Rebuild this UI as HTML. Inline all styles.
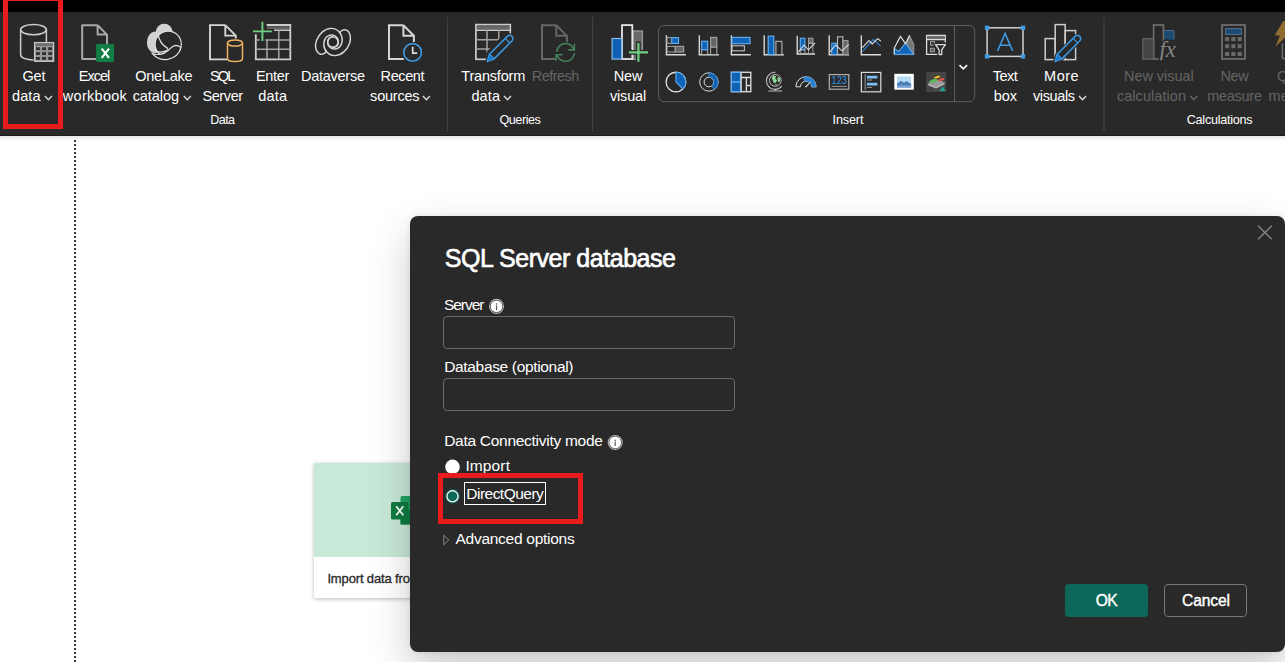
<!DOCTYPE html>
<html><head><meta charset="utf-8"><title>Power BI</title>
<style>
html,body{margin:0;padding:0;overflow:hidden}
html{width:1285px;height:662px}
body{width:1285px;height:662px;overflow:hidden;position:relative;background:#fff;font-family:"Liberation Sans",sans-serif}
.t{position:absolute;white-space:nowrap;line-height:20px;font-family:"Liberation Sans",sans-serif}
.abs{position:absolute}
svg{position:absolute;left:0;top:0;overflow:visible}
</style></head><body>
<!-- canvas -->
<div class="abs" style="left:0;top:136px;width:1285px;height:5px;background:linear-gradient(#e4e4e4,#ffffff)"></div>
<div class="abs" style="left:74px;top:140px;width:2px;height:522px;background:repeating-linear-gradient(#3a3a3a 0 2px,#fff 2px 4px)"></div>
<!-- background card -->
<div class="abs" style="left:314px;top:463px;width:200px;height:135px;background:#fff;box-shadow:0 1px 4px rgba(0,0,0,.28)">
 <div class="abs" style="left:0;top:0;width:200px;height:94px;background:#c8e9d8"></div>
</div>
<svg width="1285" height="662" viewBox="0 0 1285 662">
 <rect x="400.5" y="496" width="20" height="28.5" rx="1.5" fill="#21a366"/>
 <rect x="400.5" y="510" width="20" height="14.5" fill="#107c41"/>
 <rect x="400.5" y="503" width="20" height="7" fill="#33c481" opacity=".0"/>
 <rect x="391" y="502" width="17.5" height="17.5" rx="1.5" fill="#107c41"/>
 <path d="M396.2 506.3 L403.3 515.3 M403.3 506.3 L396.2 515.3" stroke="#fff" stroke-width="1.7" fill="none"/>
</svg>
<span class="t" style="left:327.40px;top:568.70px;font-size:13px;color:#2b2b2b;letter-spacing:-0.145px;-webkit-text-stroke:0.35px #2b2b2b;">Import data from Excel</span>
<!-- top bar + ribbon -->
<div class="abs" style="left:0;top:0;width:1285px;height:12px;background:#000"></div>
<div class="abs" style="left:0;top:12px;width:1285px;height:124px;background:#292929;border-bottom:1px solid #1c1c1c;box-sizing:border-box"></div>
<svg width="1285" height="140" viewBox="0 0 1285 140">
<defs><clipPath id="fxc"><rect x="1150" y="30" width="40" height="30.2"/></clipPath></defs>
<path d="M20.6 29.6 V54.8 C20.6 57.6 26 59.9 33.6 59.9 M46.4 29.6 V42" fill="none" stroke="#cdcdcd" stroke-width="1.5"/>
<ellipse cx="33.5" cy="29.6" rx="12.9" ry="5.1" fill="none" stroke="#cdcdcd" stroke-width="1.5"/>
<rect x="34.6" y="42.6" width="19" height="18.7" fill="#959595" stroke="#c6c6c6" stroke-width="1.3"/>
<rect x="35.3" y="43.3" width="17.6" height="2.6" fill="#6e6e6e"/>
<rect x="36.0" y="47.3" width="3.9" height="2.8" fill="#2f2f2f"/>
<rect x="36.0" y="52.2" width="3.9" height="2.8" fill="#2f2f2f"/>
<rect x="36.0" y="57.0" width="3.9" height="2.8" fill="#2f2f2f"/>
<rect x="42.1" y="47.3" width="3.9" height="2.8" fill="#2f2f2f"/>
<rect x="42.1" y="52.2" width="3.9" height="2.8" fill="#2f2f2f"/>
<rect x="42.1" y="57.0" width="3.9" height="2.8" fill="#2f2f2f"/>
<rect x="48.2" y="47.3" width="3.9" height="2.8" fill="#2f2f2f"/>
<rect x="48.2" y="52.2" width="3.9" height="2.8" fill="#2f2f2f"/>
<rect x="48.2" y="57.0" width="3.9" height="2.8" fill="#2f2f2f"/>
<path d="M97.6 25.2 H82.2 V58.900000000000006 H96 M97.6 25.2 L107.0 34.6 V44 M97.6 25.2 V34.6 H107.0" fill="none" stroke="#a9a9a9" stroke-width="2.0" stroke-linejoin="round"/>
<rect x="96.1" y="43.9" width="18" height="18.2" rx="1.4" fill="#127d44"/>
<path d="M101.7 48.6 L109.0 57.8 M109.0 48.6 L101.7 57.8" stroke="#fff" stroke-width="2.1" fill="none"/>
<circle cx="164.2" cy="32.2" r="8.4" fill="#d2d2d2"/>
<ellipse cx="155.2" cy="42.4" rx="8.3" ry="10.9" fill="#d2d2d2"/>
<circle cx="168.2" cy="44.2" r="13.1" fill="#292929" stroke="#e2e2e2" stroke-width="1.2"/>
<path d="M151.8 52.9 C157 55.8 163.6 54.6 168.4 50.2 C171 47.8 173 45.4 176 45.3 C178.2 45.3 179.6 46.4 180.9 47.6 A16.5 16.5 0 0 1 151.8 52.9 Z" fill="#292929" stroke="#e2e2e2" stroke-width="1.2" stroke-linejoin="round"/>
<path d="M157.2 51.6 C161 52.6 165.4 51.6 168.6 49.6" fill="none" stroke="#e2e2e2" stroke-width="1.2"/>
<path d="M157.9 33.4 C158.6 39.5 162.2 45.4 168 48.6" fill="none" stroke="#e2e2e2" stroke-width="1.3"/>
<path d="M225.3 25.1 H210 V59.4 H227 M225.3 25.1 L235.8 35.6 V38.6 M225.3 25.1 V35.6 H235.8" fill="none" stroke="#d6d6d6" stroke-width="1.9" stroke-linejoin="miter"/>
<path d="M227.5 43 V58.4 C227.5 60.2 230.8 61.5 235 61.5 C239.2 61.5 242.5 60.2 242.5 58.4 V43" fill="#292929" stroke="#f0b263" stroke-width="1.5"/>
<ellipse cx="235" cy="43" rx="7.5" ry="3.1" fill="#292929" stroke="#f0b263" stroke-width="1.5"/>
<path d="M266.6 25 H290.3 V59.3 H255.8 V34.2" fill="none" stroke="#cecece" stroke-width="1.8"/>
<rect x="267" y="26.3" width="21.9" height="2.7" fill="#626262"/>
<path d="M274 30.2 H290.3" fill="none" stroke="#cecece" stroke-width="1.5"/>
<path d="M255.8 39.9 H259.6 M265.2 39.9 H290.3 M255.8 49.3 H290.3 M267 39.9 V59.3 M278.8 30.2 V59.3" fill="none" stroke="#a4a4a4" stroke-width="1.5"/>
<path d="M262.4 21.8 V40.9 M252.9 31.4 H271.9" stroke="#6fd083" stroke-width="1.9" fill="none"/>
<g fill="none" stroke="#d6d6d6" stroke-width="1.45" stroke-linecap="round"><path d="M326.3 51.3 C325 53.5 322 55 319.5 53.8 C315.5 51.8 314.6 46 316.5 40.5 C318.8 34 324.5 28.6 331 28.4 C337.5 28.2 342.2 33.5 342.2 40 C342.2 45.5 338.6 49.2 334.2 49 C330.2 48.8 327.4 45.8 327.6 42 C327.8 38.6 330.2 36.8 332.9 36.9"/><path d="M326.3 51.3 C325 53.5 322 55 319.5 53.8 C315.5 51.8 314.6 46 316.5 40.5 C318.8 34 324.5 28.6 331 28.4 C337.5 28.2 342.2 33.5 342.2 40 C342.2 45.5 338.6 49.2 334.2 49 C330.2 48.8 327.4 45.8 327.6 42 C327.8 38.6 330.2 36.8 332.9 36.9" transform="rotate(180 333 42)"/><circle cx="332.9" cy="42.1" r="5.2"/></g>
<path d="M403.4 25.2 H389 V59.0 H403.8 M403.4 25.2 L413.9 35.7 V42 M403.4 25.2 V35.7 H413.9" fill="none" stroke="#d6d6d6" stroke-width="2.0" stroke-linejoin="miter"/>
<circle cx="412.6" cy="52.4" r="8.8" fill="#292929" stroke="#3f9be3" stroke-width="1.6"/>
<path d="M412.7 46.8 V53.1 H417.2" fill="none" stroke="#dcdcdc" stroke-width="1.7"/>
<path d="M447.6 17 V132" stroke="#444" stroke-width="1"/>
<path d="M592.6 17 V132" stroke="#444" stroke-width="1"/>
<path d="M1104.0 17 V132" stroke="#444" stroke-width="1"/>
<rect x="475.9" y="24.6" width="34.4" height="34.7" fill="none" stroke="#cacaca" stroke-width="1.7"/>
<rect x="477" y="26.1" width="32.2" height="3.1" fill="#6a6a6a"/>
<path d="M475.9 30.3 H510.3" fill="none" stroke="#cacaca" stroke-width="1.5"/>
<path d="M475.9 39.8 H510.3 M475.9 48.9 H510.3 M487 30.3 V59.3 M498.8 30.3 V59.3" fill="none" stroke="#a2a2a2" stroke-width="1.5"/>
<g transform="translate(0,0)">
 <path d="M504.6 33.6 L513.5 33.6 L513.5 62.5 L486.2 62.5 L486.2 52.6 Z" fill="#292929"/>
 <path d="M489.2 54.5 L507.3 36.4 A3.25 3.25 0 0 1 511.9 41.0 L493.8 59.1 L487 61.8 Z" fill="#292929" stroke="#292929" stroke-width="3.6" stroke-linejoin="round"/>
 <path d="M489.2 54.5 L507.3 36.4 A3.25 3.25 0 0 1 511.9 41.0 L493.8 59.1" fill="#292929" stroke="#3d98e0" stroke-width="1.55" stroke-linejoin="round"/>
 <path d="M489.2 54.5 L487.0 61.8 L493.8 59.1 L491.9 56.3 Z" fill="#1473c8" stroke="#3d98e0" stroke-width="1.2" stroke-linejoin="round"/>
 <path d="M505.3 38.4 L509.9 43.0" stroke="#3d98e0" stroke-width="1.3" fill="none"/>
</g>
<path d="M556.3 25.2 H542 V59.099999999999994 H555 M556.3 25.2 L566.9 35.8 V42 M556.3 25.2 V35.8 H566.9" fill="none" stroke="#676767" stroke-width="2.0" stroke-linejoin="miter"/>
<g fill="none" stroke="#46815c" stroke-width="1.6"><path d="M556.8 51.9 A8.8 8.8 0 0 1 573.9 49.4"/><path d="M574.4 53.0 A8.8 8.8 0 0 1 557.3 55.4"/><path d="M574.4 43.8 V49.9 H568.4"/><path d="M556.2 60.8 V54.7 H562.6"/></g>
<rect x="633.2" y="31" width="9.2" height="28.4" fill="#696969" stroke="#9a9a9a" stroke-width="1.3"/>
<rect x="622" y="25.1" width="10.3" height="33.9" fill="#292929" stroke="#e6e6e6" stroke-width="1.8"/>
<rect x="612.1" y="38.5" width="9.6" height="20.6" fill="#0f60b2" stroke="#86bdec" stroke-width="1.2"/>
<path d="M638.4 41.4 V63 M627.6 52.4 H649.4" stroke="#292929" stroke-width="4.6" fill="none"/>
<rect x="639.4" y="53.4" width="5" height="7.4" fill="#292929"/>
<path d="M638.4 43 V61.8 M628.9 52.4 H648.1" stroke="#6fd083" stroke-width="2.2" fill="none"/>
<rect x="658.5" y="25.5" width="316.2" height="76.2" rx="5.5" fill="none" stroke="#5e5e5e" stroke-width="1"/>
<path d="M954.5 25.5 V101.7" stroke="#5e5e5e" stroke-width="1"/>
<polyline points="959.5,65.1 963.3,68.9 967.1,65.1" fill="none" stroke="#fff" stroke-width="1.6"/>
<path d="M666.4 35.2 V54.7 H685.8" fill="none" stroke="#dcdcdc" stroke-width="1.35"/>
<rect x="667" y="37.6" width="4.8" height="5.8" fill="#333" stroke="#9c9c9c" stroke-width="1.1"/>
<rect x="671.8" y="37.6" width="6.7" height="5.8" fill="#0f64b8" stroke="#62aaea" stroke-width="1.2"/>
<rect x="667" y="46.4" width="8.2" height="5.6" fill="none" stroke="#aaa" stroke-width="1"/>
<rect x="675.2" y="46.4" width="8.4" height="5.6" fill="#666" stroke="#9c9c9c" stroke-width="1.2"/>
<path d="M699.3 35.2 V54.7 H718.8" fill="none" stroke="#dcdcdc" stroke-width="1.35"/>
<rect x="701.6" y="49.6" width="6" height="5" fill="none" stroke="#aaa" stroke-width="1"/>
<rect x="701.6" y="41.3" width="6" height="8.4" fill="#0f64b8" stroke="#62aaea" stroke-width="1.2"/>
<rect x="710.6" y="47" width="6.2" height="7.6" fill="none" stroke="#aaa" stroke-width="1"/>
<rect x="710.6" y="37.4" width="6.2" height="9.6" fill="#666" stroke="#9c9c9c" stroke-width="1.2"/>
<path d="M731.4 35.2 V54.7 H750.8" fill="none" stroke="#dcdcdc" stroke-width="1.35"/>
<rect x="732" y="37.4" width="18" height="6.3" fill="#0f64b8" stroke="#62aaea" stroke-width="1.2"/>
<rect x="732" y="45.8" width="12.4" height="5" fill="none" stroke="#c0c0c0" stroke-width="1.1"/>
<path d="M764.2 35.2 V54.7 H783.8" fill="none" stroke="#dcdcdc" stroke-width="1.35"/>
<rect x="768.2" y="36.2" width="5.6" height="18.4" fill="#0f64b8" stroke="#62aaea" stroke-width="1.2"/>
<rect x="775.9" y="41.4" width="6" height="13.2" fill="none" stroke="#aaa" stroke-width="1.2"/>
<path d="M797.2 35.8 V54 H815" fill="none" stroke="#dcdcdc" stroke-width="1.35"/>
<rect x="800.3" y="38.2" width="4.6" height="11.6" fill="#0f64b8" stroke="#62aaea" stroke-width="1.1"/>
<rect x="800.3" y="49.8" width="4.6" height="4" fill="none" stroke="#aaa" stroke-width=".9"/>
<rect x="808.5" y="38.2" width="4.4" height="5" fill="#666" stroke="#9c9c9c" stroke-width="1.1"/>
<rect x="808.5" y="43.2" width="4.4" height="10.6" fill="none" stroke="#aaa" stroke-width=".9"/>
<polyline points="798.3,52.2 804,45 808.4,49.8 815,43" fill="none" stroke="#e0e0e0" stroke-width="1.1"/>
<path d="M829.2 35.2 V54.7 H849" fill="none" stroke="#dcdcdc" stroke-width="1.35"/>
<rect x="831.8" y="43.2" width="5.6" height="11.2" fill="#0f64b8" stroke="#62aaea" stroke-width="1.1"/>
<rect x="837.5" y="36.8" width="5.4" height="17.6" fill="none" stroke="#bbb" stroke-width="1.1"/>
<rect x="843" y="40.6" width="5" height="13.8" fill="#666" stroke="#9c9c9c" stroke-width="1.1"/>
<polyline points="829.9,52.2 835.6,45 842,50.8 848.8,44.3" fill="none" stroke="#e0e0e0" stroke-width="1.1"/>
<path d="M861.3 35.2 V54.7 H881" fill="none" stroke="#dcdcdc" stroke-width="1.35"/>
<polyline points="862.4,51.6 873.2,39.6 880.6,46.2" fill="none" stroke="#2f86d6" stroke-width="1.1"/>
<polyline points="862.4,47.7 868.9,40.5 872.2,43.9 877.6,38.6 880.8,41.0" fill="none" stroke="#e0e0e0" stroke-width="1.1"/>
<path d="M909.5 35.4 L913.8 44.4 V54.4 H903 Z" fill="#777" stroke="#aaa" stroke-width=".8"/>
<path d="M894.3 48.5 L898.8 51.5 L905.5 43 L913.6 54.4 H894.3 Z" fill="#0f64b8" stroke="#62aaea" stroke-width="1.1"/>
<path d="M894.3 54.6 V48 L900.4 36.4 L905.5 43.6 L909.5 35.4" fill="none" stroke="#e0e0e0" stroke-width="1.1"/>
<path d="M894.3 54.6 H913.9" fill="none" stroke="#5d9bd6" stroke-width="1"/>
<path d="M945.3 42.6 V35.5 H926.6 V54.4 H937.2 M926.6 39.7 H945.3" fill="none" stroke="#dcdcdc" stroke-width="1.3"/>
<rect x="927.3" y="36.2" width="17.3" height="2.8" fill="#6e6e6e"/>
<rect x="930.5" y="41.6" width="4" height="3.6" fill="#3c3c3c" stroke="#a6a6a6" stroke-width=".9"/>
<rect x="930.5" y="48.2" width="4" height="3.6" fill="#5c5c5c" stroke="#a6a6a6" stroke-width=".9"/>
<path d="M933.6 43.4 H947 V47 L943 51 V56 H938 V51 L934 47 Z" fill="#292929"/>
<path d="M935.5 44.6 H945.4 L941.7 49.8 V54.5 H939.1 V49.8 Z" fill="#292929" stroke="#dcdcdc" stroke-width="1.3" stroke-linejoin="round"/>
<circle cx="675.9" cy="82" r="9.8" fill="none" stroke="#dcdcdc" stroke-width="1.35"/>
<path d="M675.9 82 V72.2 A9.8 9.8 0 0 1 682.9 88.9 Z" fill="#0f64b8" stroke="#62aaea" stroke-width="1.1"/>
<circle cx="708.9" cy="82" r="9.2" fill="none" stroke="#dcdcdc" stroke-width="1"/>
<circle cx="708.9" cy="82" r="4.8" fill="none" stroke="#dcdcdc" stroke-width="1"/>
<path d="M708.9 72.8 A9.2 9.2 0 0 1 714.2 89.5 L711.7 85.9 A4.8 4.8 0 0 0 708.9 77.2 Z" fill="#0f64b8" stroke="#5d9bd6" stroke-width=".6"/>
<rect x="731.4" y="72.3" width="19.4" height="19.4" fill="none" stroke="#dcdcdc" stroke-width="1.35"/>
<rect x="731.4" y="72.3" width="9.6" height="9.7" fill="#0f64b8" stroke="#62aaea" stroke-width="1.2"/>
<rect x="731.4" y="82" width="9.6" height="9.7" fill="#0f64b8" stroke="#62aaea" stroke-width="1.2"/>
<path d="M741 77.5 H750.8 M746.4 77.5 V91.7 M746.4 85.5 H750.8 M741 72.3 V91.7" fill="none" stroke="#dcdcdc" stroke-width="1.35"/>
<circle cx="775.3" cy="80.4" r="5.9" fill="#2e2e2e" stroke="#bbb" stroke-width="1"/>
<path d="M771.6 77.6 L773.6 75.6 L776 76 L775.2 78.6 L777 80.2 L775.6 83 L773.4 82.6 L772.8 80 Z M777.6 77 L779.8 77.8 L780.2 81 L778.2 82.6 L777.6 80 Z M774.4 84.4 L777 84 L776.4 85.6 Z" fill="#8fd99a"/>
<path d="M775.6 72.2 A8.6 8.6 0 1 0 781.8 86.2" fill="none" stroke="#bbb" stroke-width="1.1"/>
<path d="M775 88.8 V91 M768.4 91 H782" fill="none" stroke="#bbb" stroke-width="1.1"/>
<path d="M795.9 86.8 A10.1 10.1 0 0 1 816.1 86.8 H811.6 A5.6 5.6 0 0 0 800.4 86.8 Z" fill="none" stroke="#dcdcdc" stroke-width="1"/>
<path d="M803.4 77.0 A10.1 10.1 0 0 1 816.1 86.8 H811.6 A5.6 5.6 0 0 0 804.6 81.4 Z" fill="#2a7fd0" stroke="#5d9bd6" stroke-width=".6"/>
<path d="M805.0 86.9 L806.6 86.9 L810.4 81.8 Z" fill="#d8d8d8" stroke="#d8d8d8" stroke-width=".6"/>
<rect x="829.3" y="74.6" width="19.5" height="14.6" fill="none" stroke="#b0b0b0" stroke-width="1.2"/>
<path d="M831.6 86.4 H846.6" stroke="#9a9a9a" stroke-width="1"/>
<text x="831.6" y="84.4" font-family="Liberation Sans, sans-serif" font-size="10.4" fill="#2f95e6" textLength="15.4" lengthAdjust="spacingAndGlyphs">123</text>
<rect x="861.4" y="72.4" width="19.4" height="19.4" fill="none" stroke="#dcdcdc" stroke-width="1.2"/>
<path d="M865.2 74 V90.2" stroke="#999" stroke-width="1"/>
<rect x="867" y="75.8" width="10.4" height="2.7" fill="#7cc0f5"/><rect x="867" y="82.8" width="10.4" height="2.7" fill="#7cc0f5"/>
<path d="M867 80 H872 M867 87.4 H872" stroke="#999" stroke-width="1"/>
<rect x="894.3" y="73.8" width="19.5" height="15.9" fill="#fff"/>
<rect x="897" y="76.4" width="14.1" height="11" fill="#b9ddf7"/>
<path d="M897 83.4 L899.4 82 L901.2 80.8 L902.6 82 L904.4 82.6 L906 81.2 L907.6 81.6 L909.4 83 L911.1 83.6 V87.4 H897 Z" fill="#4f7db6"/>
<path d="M897 85.6 H911.1 V87.4 H897 Z" fill="#7ea9dc"/>
<rect x="926.2" y="72" width="20" height="20" fill="#444"/>
<path d="M927.4 85 L936 81 L945.4 84 L936 88.6 Z" fill="#bdbdbd"/>
<path d="M927.4 83.6 L936 79.6 L945.4 82.6 L936 87.2 Z" fill="#9a9a9a"/>
<path d="M928.8 81.2 L934.6 78.6 L938.2 80.6 L932.4 83.4 Z" fill="#5cb85c"/>
<path d="M933.6 77.4 L938.4 75.6 L940.8 76.8 L936 78.8 Z" fill="#f0c419"/>
<path d="M937.4 80 L942.8 77.8 L944.8 79.4 L939.6 81.6 Z" fill="#e8534f"/>
<path d="M939.4 91 L942.6 86.4 L945.6 91 Z" fill="#1aa79a"/>
<rect x="987.1" y="27.8" width="35.9" height="28.6" fill="none" stroke="#d2d2d2" stroke-width="1.5"/>
<rect x="984.9" y="25.6" width="4.4" height="4.4" fill="#3f9be3"/>
<rect x="1020.8" y="25.6" width="4.4" height="4.4" fill="#3f9be3"/>
<rect x="984.9" y="54.199999999999996" width="4.4" height="4.4" fill="#3f9be3"/>
<rect x="1020.8" y="54.199999999999996" width="4.4" height="4.4" fill="#3f9be3"/>
<path d="M997.6 50.9 L1005.1 33.5 L1012.6 50.9 M1000.2 45.3 H1010" fill="none" stroke="#3f9be3" stroke-width="1.5"/>
<rect x="1045.2" y="38.6" width="10" height="21" fill="none" stroke="#cdcdcd" stroke-width="1.5"/>
<rect x="1055.2" y="24.6" width="10" height="35" fill="none" stroke="#cdcdcd" stroke-width="1.5"/>
<rect x="1065.2" y="30.6" width="10.4" height="29" fill="none" stroke="#cdcdcd" stroke-width="1.5"/>
<g transform="translate(567.8,0.0)">
 
 <path d="M489.2 54.5 L507.3 36.4 A3.25 3.25 0 0 1 511.9 41.0 L493.8 59.1 L487 61.8 Z" fill="#292929" stroke="#292929" stroke-width="3.6" stroke-linejoin="round"/>
 <path d="M489.2 54.5 L507.3 36.4 A3.25 3.25 0 0 1 511.9 41.0 L493.8 59.1" fill="#292929" stroke="#3d98e0" stroke-width="1.55" stroke-linejoin="round"/>
 <path d="M489.2 54.5 L487.0 61.8 L493.8 59.1 L491.9 56.3 Z" fill="#1473c8" stroke="#3d98e0" stroke-width="1.2" stroke-linejoin="round"/>
 <path d="M505.3 38.4 L509.9 43.0" stroke="#3d98e0" stroke-width="1.3" fill="none"/>
</g>
<rect x="1164.2" y="30.4" width="9.6" height="9.4" fill="#1b4a73"/>
<path d="M1164 30.6 H1174 V39.6" fill="none" stroke="#4a6a8a" stroke-width="1"/>
<rect x="1153.6" y="25.0" width="9.8" height="34" fill="none" stroke="#6c6c6c" stroke-width="1.7"/>
<rect x="1142.9" y="38.7" width="10.6" height="20.3" fill="#444" stroke="#646464" stroke-width="1.3"/>
<text x="1159.6" y="56.7" font-family="Liberation Serif, serif" font-style="italic" font-size="22.5" fill="#292929" stroke="#292929" stroke-width="3.4" stroke-linejoin="round">fx</text>
<rect x="1162.4" y="42.6" width="3" height="18" fill="#292929"/>
<text x="1159.6" y="56.7" font-family="Liberation Serif, serif" font-style="italic" font-size="22.5" fill="#868686" clip-path="url(#fxc)">fx</text>
<rect x="1222.0" y="25.0" width="23.0" height="33.9" fill="none" stroke="#6a6a6a" stroke-width="1.9"/>
<rect x="1225.6" y="28.6" width="15.8" height="5.8" fill="#1b4a73" stroke="#56748f" stroke-width="1"/>
<rect x="1225.1" y="37.1" width="4.1" height="4.0" fill="#6a6a6a"/>
<rect x="1225.1" y="44.2" width="4.1" height="4.0" fill="#6a6a6a"/>
<rect x="1225.1" y="52.0" width="4.1" height="4.0" fill="#6a6a6a"/>
<rect x="1231.3" y="37.1" width="4.1" height="4.0" fill="#6a6a6a"/>
<rect x="1231.3" y="44.2" width="4.1" height="4.0" fill="#6a6a6a"/>
<rect x="1231.3" y="52.0" width="4.1" height="4.0" fill="#6a6a6a"/>
<rect x="1237.6" y="37.1" width="4.1" height="4.0" fill="#6a6a6a"/>
<rect x="1237.6" y="44.2" width="4.1" height="4.0" fill="#6a6a6a"/>
<rect x="1237.6" y="52.0" width="4.1" height="4.0" fill="#6a6a6a"/>
<path d="M1283.2 21 L1274.8 35.2 L1279.8 35.7 L1275.4 46.8 L1290 33 V21 Z" fill="#8e6c30"/>
<path d="M1282.4 43.4 V58.6 H1290" fill="none" stroke="#6e6e6e" stroke-width="1.5"/>
</svg>
<span class="t" style="left:22.60px;top:65.68px;font-size:14.5px;color:#fff;letter-spacing:-0.275px;">Get</span>
<span class="t" style="left:78.80px;top:65.68px;font-size:14.5px;color:#fff;letter-spacing:-1.012px;">Excel</span>
<span class="t" style="left:135.30px;top:65.68px;font-size:14.5px;color:#fff;letter-spacing:-0.275px;">OneLake</span>
<span class="t" style="left:210.00px;top:65.68px;font-size:14.5px;color:#fff;letter-spacing:-1.850px;">SQL</span>
<span class="t" style="left:256.00px;top:65.68px;font-size:14.5px;color:#fff;letter-spacing:-0.313px;">Enter</span>
<span class="t" style="left:301.00px;top:65.68px;font-size:14.5px;color:#fff;letter-spacing:-0.262px;">Dataverse</span>
<span class="t" style="left:380.60px;top:65.68px;font-size:14.5px;color:#fff;letter-spacing:-0.410px;">Recent</span>
<span class="t" style="left:461.30px;top:65.68px;font-size:14.5px;color:#fff;letter-spacing:-0.194px;">Transform</span>
<span class="t" style="left:531.80px;top:65.68px;font-size:14.5px;color:#646464;letter-spacing:-0.558px;">Refresh</span>
<span class="t" style="left:613.80px;top:65.68px;font-size:14.5px;color:#fff;letter-spacing:-0.200px;">New</span>
<span class="t" style="left:992.80px;top:65.68px;font-size:14.5px;color:#fff;letter-spacing:-0.533px;">Text</span>
<span class="t" style="left:1044.10px;top:65.68px;font-size:14.5px;color:#fff;letter-spacing:0.483px;">More</span>
<span class="t" style="left:1124.10px;top:65.68px;font-size:14.5px;color:#646464;letter-spacing:-0.067px;">New visual</span>
<span class="t" style="left:1220.40px;top:65.68px;font-size:14.5px;color:#646464;letter-spacing:-0.400px;">New</span>
<span class="t" style="left:1277.00px;top:65.68px;font-size:14.5px;color:#646464;letter-spacing:0.000px;">Quick</span>
<span class="t" style="left:12.10px;top:85.58px;font-size:14.5px;color:#fff;letter-spacing:0.050px;">data</span>
<span class="t" style="left:62.85px;top:85.58px;font-size:14.5px;color:#fff;letter-spacing:0.279px;">workbook</span>
<span class="t" style="left:132.70px;top:85.58px;font-size:14.5px;color:#fff;letter-spacing:-0.075px;">catalog</span>
<span class="t" style="left:202.40px;top:85.58px;font-size:14.5px;color:#fff;letter-spacing:-0.380px;">Server</span>
<span class="t" style="left:258.30px;top:85.58px;font-size:14.5px;color:#fff;letter-spacing:0.150px;">data</span>
<span class="t" style="left:370.10px;top:85.58px;font-size:14.5px;color:#fff;letter-spacing:-0.208px;">sources</span>
<span class="t" style="left:471.40px;top:85.58px;font-size:14.5px;color:#fff;letter-spacing:0.117px;">data</span>
<span class="t" style="left:610.00px;top:85.58px;font-size:14.5px;color:#fff;letter-spacing:-0.190px;">visual</span>
<span class="t" style="left:993.80px;top:85.58px;font-size:14.5px;color:#fff;letter-spacing:-0.100px;">box</span>
<span class="t" style="left:1032.90px;top:85.58px;font-size:14.5px;color:#fff;letter-spacing:-0.367px;">visuals</span>
<span class="t" style="left:1116.90px;top:85.58px;font-size:14.5px;color:#646464;letter-spacing:0.060px;">calculation</span>
<span class="t" style="left:1207.20px;top:85.58px;font-size:14.5px;color:#646464;letter-spacing:-0.267px;">measure</span>
<span class="t" style="left:1268.60px;top:85.58px;font-size:14.5px;color:#646464;letter-spacing:0.000px;">measure</span>
<span class="t" style="left:210.30px;top:110.23px;font-size:12.6px;color:#fff;letter-spacing:-0.617px;">Data</span>
<span class="t" style="left:499.50px;top:110.23px;font-size:12.6px;color:#fff;letter-spacing:-0.467px;">Queries</span>
<span class="t" style="left:832.60px;top:110.23px;font-size:12.6px;color:#fff;letter-spacing:-0.140px;">Insert</span>
<span class="t" style="left:1186.80px;top:110.23px;font-size:12.6px;color:#fff;letter-spacing:-0.268px;">Calculations</span>
<svg width="1285" height="140" viewBox="0 0 1285 140"><polyline points="44.9,96.0 48.4,99.7 51.9,96.0" fill="none" stroke="#d8d8d8" stroke-width="1.5"/><polyline points="183.8,96.0 187.3,99.7 190.8,96.0" fill="none" stroke="#d8d8d8" stroke-width="1.5"/><polyline points="422.9,96.0 426.4,99.7 429.9,96.0" fill="none" stroke="#d8d8d8" stroke-width="1.5"/><polyline points="504.0,96.0 507.5,99.7 511.0,96.0" fill="none" stroke="#d8d8d8" stroke-width="1.5"/><polyline points="1079.0,96.0 1082.5,99.7 1086.0,96.0" fill="none" stroke="#d8d8d8" stroke-width="1.5"/><polyline points="1190.3,96.0 1193.8,99.7 1197.3,96.0" fill="none" stroke="#646464" stroke-width="1.5"/></svg>
<!-- red highlight 1 -->
<div class="abs" style="left:3px;top:-4px;width:60px;height:133px;border:5px solid #e81c1c;box-sizing:border-box"></div>
<!-- dialog -->
<div class="abs" style="left:410px;top:216px;width:875px;height:436px;background:#292929;border-radius:8px;box-shadow:0 18px 40px 0 rgba(0,0,0,.21),0 0 6px 0 rgba(0,0,0,.08)"></div>
<div class="abs" style="left:443px;top:316px;width:292px;height:33px;border:1px solid #6a6a6a;border-radius:4px;box-sizing:border-box"></div>
<div class="abs" style="left:443px;top:378px;width:292px;height:33px;border:1px solid #6a6a6a;border-radius:4px;box-sizing:border-box"></div>
<div class="abs" style="left:1065px;top:584px;width:83px;height:33px;background:#0d6859;border-radius:4px"></div>
<div class="abs" style="left:1164px;top:584px;width:83px;height:33px;border:1px solid #777;border-radius:4px;box-sizing:border-box"></div>
<div class="abs" style="left:464px;top:482px;width:82.4px;height:23px;border:1.4px solid #fff;box-sizing:border-box"></div>
<svg width="1285" height="662" viewBox="0 0 1285 662">
<path d="M1258 225.8 L1271.8 239.2 M1271.8 225.8 L1258 239.2" stroke="#858585" stroke-width="1.3" fill="none"/>
<circle cx="496.5" cy="306.4" r="7.0" fill="none" stroke="#b4b4b4" stroke-width="1.1"/><circle cx="496.5" cy="306.4" r="5.9" fill="#fff"/><circle cx="496.5" cy="304.09999999999997" r="0.75" fill="#555"/><path d="M496.5 305.5 V310.0" stroke="#555" stroke-width="1.15"/>
<circle cx="615.2" cy="442.5" r="7.0" fill="none" stroke="#b4b4b4" stroke-width="1.1"/><circle cx="615.2" cy="442.5" r="5.9" fill="#fff"/><circle cx="615.2" cy="440.2" r="0.75" fill="#555"/><path d="M615.2 441.6 V446.1" stroke="#555" stroke-width="1.15"/>
<circle cx="452.5" cy="466.8" r="7.3" fill="#fff"/>
<circle cx="452.5" cy="496.3" r="7.2" fill="#0d6859"/><circle cx="452.5" cy="496.3" r="5.55" fill="#0d6859" stroke="#f2f2f2" stroke-width="1.35"/>
<path d="M443.8 535.2 L448.8 540 L443.8 544.8 Z" fill="none" stroke="#8a8a8a" stroke-width="1"/>
</svg>
<span class="t" style="left:444.80px;top:248.24px;font-size:25px;color:#fff;letter-spacing:-0.461px;-webkit-text-stroke:0.65px #fff;">SQL Server database</span>
<span class="t" style="left:443.90px;top:294.53px;font-size:15.5px;color:#fff;letter-spacing:-1.010px;">Server</span>
<span class="t" style="left:444.20px;top:356.53px;font-size:15.5px;color:#fff;letter-spacing:-0.333px;">Database (optional)</span>
<span class="t" style="left:444.20px;top:430.63px;font-size:15.5px;color:#fff;letter-spacing:-0.279px;">Data Connectivity mode</span>
<span class="t" style="left:465.40px;top:455.63px;font-size:15.5px;color:#fff;letter-spacing:0.130px;">Import</span>
<span class="t" style="left:466.30px;top:484.33px;font-size:15.5px;color:#fff;letter-spacing:-0.520px;">DirectQuery</span>
<span class="t" style="left:455.50px;top:528.93px;font-size:15.5px;color:#fff;letter-spacing:-0.270px;">Advanced options</span>
<span class="t" style="left:1095.80px;top:590.69px;font-size:15.6px;color:#fff;letter-spacing:-0.750px;-webkit-text-stroke:0.4px #fff;">OK</span>
<span class="t" style="left:1182.00px;top:590.69px;font-size:15.6px;color:#fff;letter-spacing:-0.110px;-webkit-text-stroke:0.4px #fff;">Cancel</span>
<!-- red highlight 2 -->
<div class="abs" style="left:438px;top:473px;width:145px;height:51px;border:5px solid #e81c1c;box-sizing:border-box"></div>
</body></html>
